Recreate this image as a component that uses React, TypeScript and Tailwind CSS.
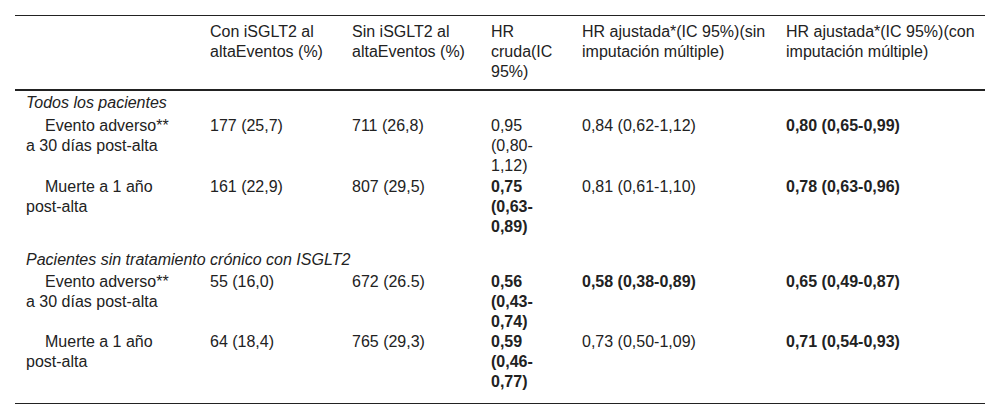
import React from "react";

type Cell = { text: string; bold?: boolean };

interface DataRow {
  label: string;
  pt: string;
  pb: string;
  cells: Cell[];
}

interface Group {
  title: string;
  pt: string;
  rows: DataRow[];
}

const groups: Group[] = [
  {
    title: "Todos los pacientes",
    pt: "pt-[2px]",
    rows: [
      {
        label: "Evento adverso** a 30 días post-alta",
        pt: "pt-[3px]",
        pb: "pb-0",
        cells: [
          { text: "177 (25,7)" },
          { text: "711 (26,8)" },
          { text: "0,95 (0,80-1,12)" },
          { text: "0,84 (0,62-1,12)" },
          { text: "0,80 (0,65-0,99)", bold: true },
        ],
      },
      {
        label: "Muerte a 1 año post-alta",
        pt: "pt-[1px]",
        pb: "pb-0",
        cells: [
          { text: "161 (22,9)" },
          { text: "807 (29,5)" },
          { text: "0,75 (0,63-0,89)", bold: true },
          { text: "0,81 (0,61-1,10)" },
          { text: "0,78 (0,63-0,96)", bold: true },
        ],
      },
    ],
  },
  {
    title: "Pacientes sin tratamiento crónico con ISGLT2",
    pt: "pt-[13px]",
    rows: [
      {
        label: "Evento adverso** a 30 días post-alta",
        pt: "pt-[2px]",
        pb: "pb-0",
        cells: [
          { text: "55 (16,0)" },
          { text: "672 (26.5)" },
          { text: "0,56 (0,43-0,74)", bold: true },
          { text: "0,58 (0,38-0,89)", bold: true },
          { text: "0,65 (0,49-0,87)", bold: true },
        ],
      },
      {
        label: "Muerte a 1 año post-alta",
        pt: "pt-0",
        pb: "pb-[11px]",
        cells: [
          { text: "64 (18,4)" },
          { text: "765 (29,3)" },
          { text: "0,59 (0,46-0,77)", bold: true },
          { text: "0,73 (0,50-1,09)" },
          { text: "0,71 (0,54-0,93)", bold: true },
        ],
      },
    ],
  },
];

// right padding per data column so the text wraps like the source table
const colPad = ["pl-[6px] pr-[6px]", "pl-[6px] pr-[6px]", "pl-[6px] pr-[29px]", "pl-[6px] pr-[6px]", "pl-[6px] pr-[6px]"];

const headers = [
  "Con iSGLT2 al altaEventos (%)",
  "Sin iSGLT2 al altaEventos (%)",
  "HR cruda(IC 95%)",
  "HR ajustada*(IC 95%)(sin imputación múltiple)",
  "HR ajustada*(IC 95%)(con imputación múltiple)",
];

export default function App() {
  return (
    <div
      className="w-[1000px] h-[420px] bg-white pt-[15px] px-[15px] text-[#222] text-[16px] leading-[20px]"
      style={{ fontFamily: '"Liberation Sans", Arial, sans-serif' }}
    >
      <table className="table-fixed w-[970px] border-collapse border-t border-b border-[#222]">
        <colgroup>
          <col className="w-[189px]" />
          <col className="w-[142px]" />
          <col className="w-[139px]" />
          <col className="w-[91px]" />
          <col className="w-[204px]" />
          <col className="w-[205px]" />
        </colgroup>
        <thead>
          <tr className="border-b-2 border-[#222]">
            <th className="pt-[6px] pb-[7px] pl-[11px] pr-[30px]" />
            {headers.map((h, i) => (
              <th key={h} className={`pt-[6px] pb-[7px] font-normal text-left align-top ${colPad[i]}`}>
                {h}
              </th>
            ))}
          </tr>
        </thead>
        <tbody>
          {groups.map((g) => (
            <React.Fragment key={g.title}>
              <tr>
                <td colSpan={6} className={`${g.pt} pb-0 pl-[11px] italic text-left`}>
                  {g.title}
                </td>
              </tr>
              {g.rows.map((r) => (
                <tr key={g.title + r.label}>
                  <td className={`${r.pt} ${r.pb} pl-[11px] pr-[30px] indent-[19px] align-top`}>
                    {r.label}
                  </td>
                  {r.cells.map((c, i) => (
                    <td
                      key={i}
                      className={`${r.pt} ${r.pb} align-top ${colPad[i]} ${c.bold ? "font-bold" : ""}`}
                    >
                      {c.text}
                    </td>
                  ))}
                </tr>
              ))}
            </React.Fragment>
          ))}
        </tbody>
      </table>
    </div>
  );
}
